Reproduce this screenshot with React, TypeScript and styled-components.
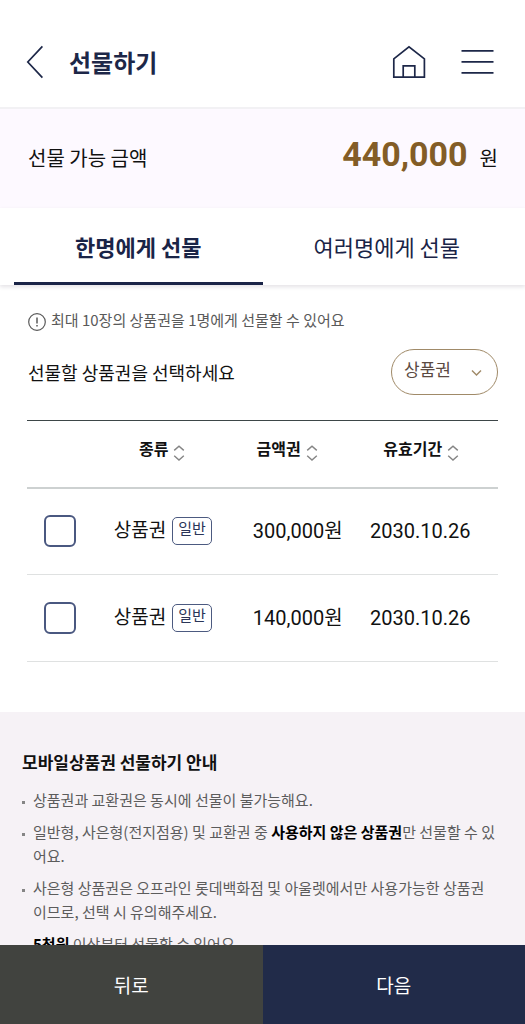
import React, { useState } from 'react';
import styled, { createGlobalStyle } from 'styled-components';

const GlobalStyle = createGlobalStyle`
  *, *::before, *::after { box-sizing: border-box; }
  html, body { margin: 0; padding: 0; }
  body {
    background: #fff;
    color: #111;
    font-family: "Noto Sans CJK KR", "Noto Sans", sans-serif;
  }
  button, select, input { font: inherit; color: inherit; }
  button { border: 0; padding: 0; background: none; cursor: pointer; }
  h1, h2, p, ul { margin: 0; padding: 0; }
`;

const Page = styled.div`
  display: flex;
  flex-direction: column;
  height: 100vh;
`;

const Header = styled.header`
  display: flex;
  align-items: center;
  flex: none;
  padding: 38px 31px 21px 26px;
  border-bottom: 2px solid #f2f1f4;
`;

const Title = styled.h1`
  flex: 1;
  margin-left: 26px;
  font-size: 24px;
  line-height: 48px;
  font-weight: 700;
  color: #1d2748;
`;

const IconButton = styled.button`
  display: flex;
  & + & { margin-left: 35px; }
`;

const Scroll = styled.main`
  flex: 1;
  min-height: 0;
  overflow-y: auto;
  scrollbar-width: none;
`;

const Balance = styled.section`
  display: flex;
  align-items: baseline;
  justify-content: space-between;
  padding: 20px 27px 25px 28px;
  background: #fdf9ff;
  font-size: 20px;
  line-height: 50px;
`;

const Amount = styled.strong`
  margin-right: 12px;
  font-family: Roboto, sans-serif;
  font-size: 34px;
  font-weight: 700;
  color: #835d26;
`;

const Tabs = styled.div`
  display: flex;
  padding: 0 14px;
  box-shadow: 0 2px 4px rgba(30, 20, 50, 0.12);
`;

const Tab = styled.button<{ $active: boolean }>`
  flex: 1;
  padding: 14px 0 12px;
  border-bottom: 3px solid ${(p) => (p.$active ? '#1a2447' : 'transparent')};
  font-size: 22px;
  line-height: 48px;
  font-weight: ${(p) => (p.$active ? 700 : 400)};
  color: #1a2447;
`;

const Content = styled.section`
  padding: 23px 27px 50px;
`;

const Notice = styled.p`
  display: flex;
  align-items: center;
  gap: 5px;
  padding-left: 1px;
  font-size: 15px;
  line-height: 24px;
  color: #5a5a5a;
  svg { flex: none; margin-top: 4px; }
`;

const FilterRow = styled.div`
  display: flex;
  align-items: center;
  justify-content: space-between;
  margin: 17px 0 25px;
  padding-left: 1px;
  font-size: 18px;
  line-height: 28px;
`;

const SelectBox = styled.div`
  position: relative;
  display: flex;
  svg {
    position: absolute;
    right: 16px;
    top: 20px;
    pointer-events: none;
  }
`;

const Select = styled.select`
  appearance: none;
  width: 107px;
  height: 46px;
  padding: 0 32px 6px 12px;
  border: 1px solid #a08a68;
  border-radius: 23px;
  background: #fff;
  font-size: 17px;
  color: #5b4a42;
`;

const Table = styled.table`
  width: 100%;
  table-layout: fixed;
  border-collapse: collapse;
  border-top: 1px solid #3d4648;
`;

const Col = styled.col<{ $width: string }>`
  width: ${(p) => p.$width};
`;

const HeadCell = styled.th`
  height: 67px;
  padding: 0;
  border-bottom: 2px solid #cdd1d1;
`;

const SortButton = styled.button`
  display: flex;
  align-items: center;
  justify-content: center;
  gap: 5px;
  width: 100%;
  padding: 0 0 12px 2px;
  font-size: 16px;
  line-height: 24px;
  font-weight: 700;
  svg { margin-top: 10px; }
`;

const Cell = styled.td<{ $align?: string }>`
  height: 87px;
  padding: 0;
  border-bottom: 1px solid #dfe1e1;
  text-align: ${(p) => p.$align || 'center'};
  font-family: Roboto, "Noto Sans CJK KR", sans-serif;
  font-size: 20px;
  line-height: 28px;
  white-space: nowrap;
`;

const Kind = styled.div`
  display: flex;
  align-items: center;
  justify-content: center;
  gap: 6px;
  padding-left: 3px;
  font-size: 19px;
`;

const Badge = styled.span`
  padding: 0 5px 4px;
  border: 1px solid #4c5a80;
  border-radius: 5px;
  font-size: 15px;
  line-height: 22px;
  color: #2a3558;
`;

const Check = styled.input`
  appearance: none;
  display: block;
  width: 32px;
  height: 32px;
  margin: 0 auto;
  border: 2px solid #4a5880;
  border-radius: 6px;
  background: #fff;
  &:checked { background: #4a5880; }
`;

const Guide = styled.section`
  padding: 36px 28px 24px 22px;
  background: #f6f2f6;
`;

const GuideTitle = styled.h2`
  margin-bottom: 12px;
  font-size: 17px;
  line-height: 28px;
  font-weight: 700;
`;

const GuideList = styled.ul`
  display: flex;
  flex-direction: column;
  gap: 8px;
  list-style: none;
`;

const GuideItem = styled.li`
  display: flex;
  gap: 8px;
  font-size: 15px;
  line-height: 24px;
  color: #5c5c5c;
  word-break: break-all;
  &::before {
    content: '';
    flex: none;
    width: 3px;
    height: 3px;
    margin-top: 13px;
    background: #858585;
  }
  strong { color: #000; font-weight: 700; }
`;

const Footer = styled.footer`
  display: flex;
  flex: none;
`;

const FooterButton = styled.button<{ $bg: string }>`
  flex: 1;
  padding: 22px 0 21px;
  background: ${(p) => p.$bg};
  font-size: 19px;
  line-height: 36px;
  color: #fff;
`;

const SortIcon = () => (
  <svg width="12" height="16" viewBox="0 0 12 16" fill="none" stroke="#858585" strokeWidth="1.4" aria-hidden="true">
    <path d="M1.2 5.4 6 1.2l4.8 4.2M1.2 10.8 6 15l4.8-4.2" />
  </svg>
);

const vouchers = [
  { id: 'v1', amount: '300,000원', expires: '2030.10.26' },
  { id: 'v2', amount: '140,000원', expires: '2030.10.26' },
];

const tabs = ['한명에게 선물', '여러명에게 선물'];

export default function App() {
  const [tab, setTab] = useState(0);

  return (
    <>
      <GlobalStyle />
      <Page>
        <Header>
          <IconButton type="button" aria-label="뒤로가기">
            <svg width="17" height="34" viewBox="0 0 17 34" fill="none" stroke="#1d2748" strokeWidth="1.7">
              <path d="M16.4 1.4 1.8 17l14.6 15.6" />
            </svg>
          </IconButton>
          <Title>선물하기</Title>
          <IconButton type="button" aria-label="홈">
            <svg width="34" height="34" viewBox="0 0 34 34" fill="none" stroke="#1d2748" strokeWidth="1.7">
              <path d="M1.8 13.8 17 1.8l15.4 12v18.4H1.8zM11.2 32.2V20.8h11.6v11.4" />
            </svg>
          </IconButton>
          <IconButton type="button" aria-label="메뉴">
            <svg width="33" height="34" viewBox="0 0 33 34" fill="none" stroke="#1d2748" strokeWidth="1.8">
              <path d="M.5 5.9h32M.5 16.9h32M.5 27.9h32" />
            </svg>
          </IconButton>
        </Header>

        <Scroll>
          <Balance>
            <span>선물 가능 금액</span>
            <span>
              <Amount>440,000</Amount>원
            </span>
          </Balance>

          <Tabs role="tablist">
            {tabs.map((label, i) => (
              <Tab key={label} type="button" role="tab" aria-selected={tab === i} $active={tab === i} onClick={() => setTab(i)}>
                {label}
              </Tab>
            ))}
          </Tabs>

          <Content>
            <Notice>
              <svg width="18" height="18" viewBox="0 0 18 18" fill="none" stroke="#5a5a5a" strokeWidth="1.2" aria-hidden="true">
                <circle cx="9" cy="9" r="8.3" />
                <path d="M9 4.4v6.2M9 12v1.6" strokeWidth="1.5" />
              </svg>
              최대 10장의 상품권을 1명에게 선물할 수 있어요
            </Notice>

            <FilterRow>
              <label htmlFor="kind">선물할 상품권을 선택하세요</label>
              <SelectBox>
                <Select id="kind" defaultValue="상품권">
                  <option>상품권</option>
                  <option>교환권</option>
                </Select>
                <svg width="11" height="8" viewBox="0 0 11 8" fill="none" stroke="#a08a68" strokeWidth="1.4" aria-hidden="true">
                  <path d="m1 1.4 4.5 4.6L10 1.4" />
                </svg>
              </SelectBox>
            </FilterRow>

            <Table>
              <colgroup>
                <Col $width="14%" />
                <Col $width="29%" />
                <Col $width="24%" />
                <Col $width="33%" />
              </colgroup>
              <thead>
                <tr>
                  <HeadCell aria-label="선택" />
                  {['종류', '금액권', '유효기간'].map((label) => (
                    <HeadCell key={label} scope="col">
                      <SortButton type="button">
                        {label}
                        <SortIcon />
                      </SortButton>
                    </HeadCell>
                  ))}
                </tr>
              </thead>
              <tbody>
                {vouchers.map((v) => (
                  <tr key={v.id}>
                    <Cell>
                      <Check type="checkbox" aria-label={`상품권 ${v.amount} 선택`} />
                    </Cell>
                    <Cell>
                      <Kind>
                        상품권<Badge>일반</Badge>
                      </Kind>
                    </Cell>
                    <Cell $align="right">{v.amount}</Cell>
                    <Cell>{v.expires}</Cell>
                  </tr>
                ))}
              </tbody>
            </Table>
          </Content>

          <Guide>
            <GuideTitle>모바일상품권 선물하기 안내</GuideTitle>
            <GuideList>
              <GuideItem>
                <span>상품권과 교환권은 동시에 선물이 불가능해요.</span>
              </GuideItem>
              <GuideItem>
                <span>
                  일반형, 사은형(전지점용) 및 교환권 중 <strong>사용하지 않은 상품권</strong>만 선물할 수 있어요.
                </span>
              </GuideItem>
              <GuideItem>
                <span>사은형 상품권은 오프라인 롯데백화점 및 아울렛에서만 사용가능한 상품권이므로, 선택 시 유의해주세요.</span>
              </GuideItem>
              <GuideItem>
                <span>
                  <strong>5천원</strong> 이상부터 선물할 수 있어요.
                </span>
              </GuideItem>
            </GuideList>
          </Guide>
        </Scroll>

        <Footer>
          <FooterButton type="button" $bg="#41433f">뒤로</FooterButton>
          <FooterButton type="button" $bg="#212b49">다음</FooterButton>
        </Footer>
      </Page>
    </>
  );
}
